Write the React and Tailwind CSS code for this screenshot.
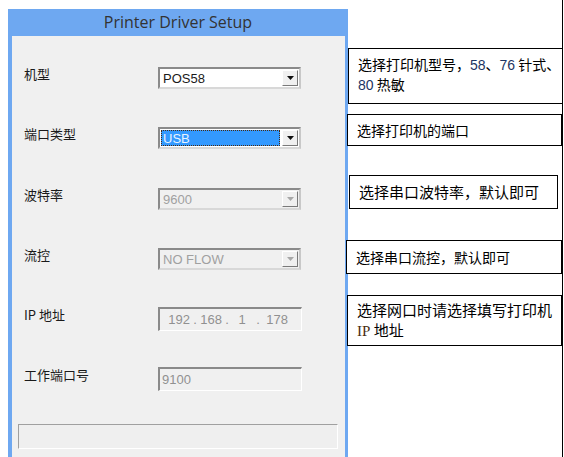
import React from 'react';

const cjk = { fontFamily: '"Noto Sans CJK SC", "Noto Sans", sans-serif' };
const latin = { fontFamily: '"Liberation Sans", Arial, sans-serif' };

const Arrow = ({ disabled }) => (
  <div className="w-[16px] h-full bg-[#f0f0f0] border-t border-l border-t-white border-l-white border-b border-r border-b-[#7a7a7a] border-r-[#7a7a7a] flex items-center justify-center shrink-0">
    <svg width="7" height="4" viewBox="0 0 7 4">
      <path d="M0 0H7L3.5 4Z" fill={disabled ? '#a8a8a8' : '#111'} />
    </svg>
  </div>
);

const Combo = ({ value, disabled, selected }) => (
  <div
    className={`w-[143px] h-[22px] flex items-stretch border-2 border-t-[#8a8a8a] border-l-[#8a8a8a] border-b-[#d8d8d8] border-r-[#c8c8c8] p-[1px] ${
      disabled ? 'bg-[#f0f0f0]' : 'bg-white'
    }`}
  >
    <div className="flex-1 flex items-center min-w-0 pr-[2px]">
      {selected ? (
        <div className="h-full w-full bg-[#3399ff] border border-dotted border-[#4a2a10] flex items-center pl-[1px]">
          <span className="text-[13px] text-[#e8f3ff] leading-none" style={latin}>{value}</span>
        </div>
      ) : (
        <span className={`text-[13px] leading-none pl-[2px] ${disabled ? 'text-[#a0a0a0]' : 'text-[#1a1a1a]'}`} style={latin}>
          {value}
        </span>
      )}
    </div>
    <Arrow disabled={disabled} />
  </div>
);

const TextBox = ({ children }) => (
  <div className="w-[144px] h-[24px] bg-[#f0f0f0] border-t-2 border-l-2 border-t-[#8a8a8a] border-l-[#8a8a8a] border-b border-r border-b-white border-r-white flex items-center text-[13px] text-[#909090] leading-none" style={latin}>
    {children}
  </div>
);

const Row = ({ label, mt, children }) => (
  <div className={`flex items-center ${mt}`}>
    <div className="w-[146px] pl-[12px] mb-[9px] text-[13px] text-[#1a1a1a] leading-none" style={cjk}>{label}</div>
    {children}
  </div>
);

const Note = ({ className, children }) => (
  <div className={`border border-black bg-white text-[14px] text-black ${className}`} style={cjk}>
    {children}
  </div>
);

const Num = ({ children }) => (
  <span className="text-[#1d3563]" style={latin}>{children}</span>
);

export default function App() {
  return (
    <div className="w-[563px] h-[457px] bg-white border-r border-black flex overflow-hidden">
      <div className="ml-[8px] mt-[9px] w-[340px] h-[460px] bg-[#6ea8f1] flex flex-col shrink-0">
        <div className="h-[27px] flex items-center justify-center text-[16px] text-[#333] pb-[2px]" style={{ fontFamily: '"Open Sans", "Noto Sans", sans-serif' }}>
          Printer Driver Setup
        </div>
        <div className="flex-1 ml-[4px] mr-[3px] bg-[#f0f0f0] flex flex-col">
          <Row label="机型" mt="mt-[31px]">
            <Combo value="POS58" />
          </Row>
          <Row label="端口类型" mt="mt-[38px]">
            <Combo value="USB" selected />
          </Row>
          <Row label="波特率" mt="mt-[39px]">
            <Combo value="9600" disabled />
          </Row>
          <Row label="流控" mt="mt-[38px]">
            <Combo value="NO FLOW" disabled />
          </Row>
          <Row label="IP 地址" mt="mt-[37px]">
            <TextBox>
              <span className="w-[30px] text-right">192</span>
              <span className="w-[10px] text-center">.</span>
              <span className="w-[22px] text-right">168</span>
              <span className="w-[10px] text-center">.</span>
              <span className="w-[20px] text-center">1</span>
              <span className="w-[12px] text-center">.</span>
              <span className="w-[24px] text-right">178</span>
            </TextBox>
          </Row>
          <Row label="工作端口号" mt="mt-[36px]">
            <TextBox>
              <span className="pl-[2px]">9100</span>
            </TextBox>
          </Row>
          <div className="mt-[33px] ml-[6px] w-[320px] h-[25px] bg-[#efefef] border-t border-l border-t-[#a0a0a0] border-l-[#a0a0a0] border-b border-r border-b-white border-r-white" />
        </div>
      </div>

      <div className="flex flex-col w-[215px]">
        <Note className="mt-[48px] w-[215px] h-[56px] pl-[9px] pt-[6px] leading-[19px]">
          选择打印机型号，<Num>58</Num>、<Num>76</Num> 针式、
          <br />
          <Num>80</Num> 热敏
        </Note>
        <Note className="mt-[10px] -ml-[1px] w-[215px] h-[32px] pl-[9px] flex items-center">
          选择打印机的端口
        </Note>
        <Note className="mt-[29px] ml-[1px] w-[209px] h-[34px] pl-[9px] flex items-center text-[15px]">
          选择串口波特率，默认即可
        </Note>
        <Note className="mt-[31px] -ml-[2px] w-[216px] h-[34px] pl-[9px] flex items-center">
          选择串口流控，默认即可
        </Note>
        <Note className="mt-[21px] -ml-[1px] w-[215px] h-[51px] pl-[9px] pt-[4px] leading-[20px] text-[15px]">
          选择网口时请选择填写打印机
          <br />
          <span className="text-[#4a2e12]" style={{ fontFamily: '"Liberation Serif", serif' }}>IP</span> 地址
        </Note>
      </div>
    </div>
  );
}
